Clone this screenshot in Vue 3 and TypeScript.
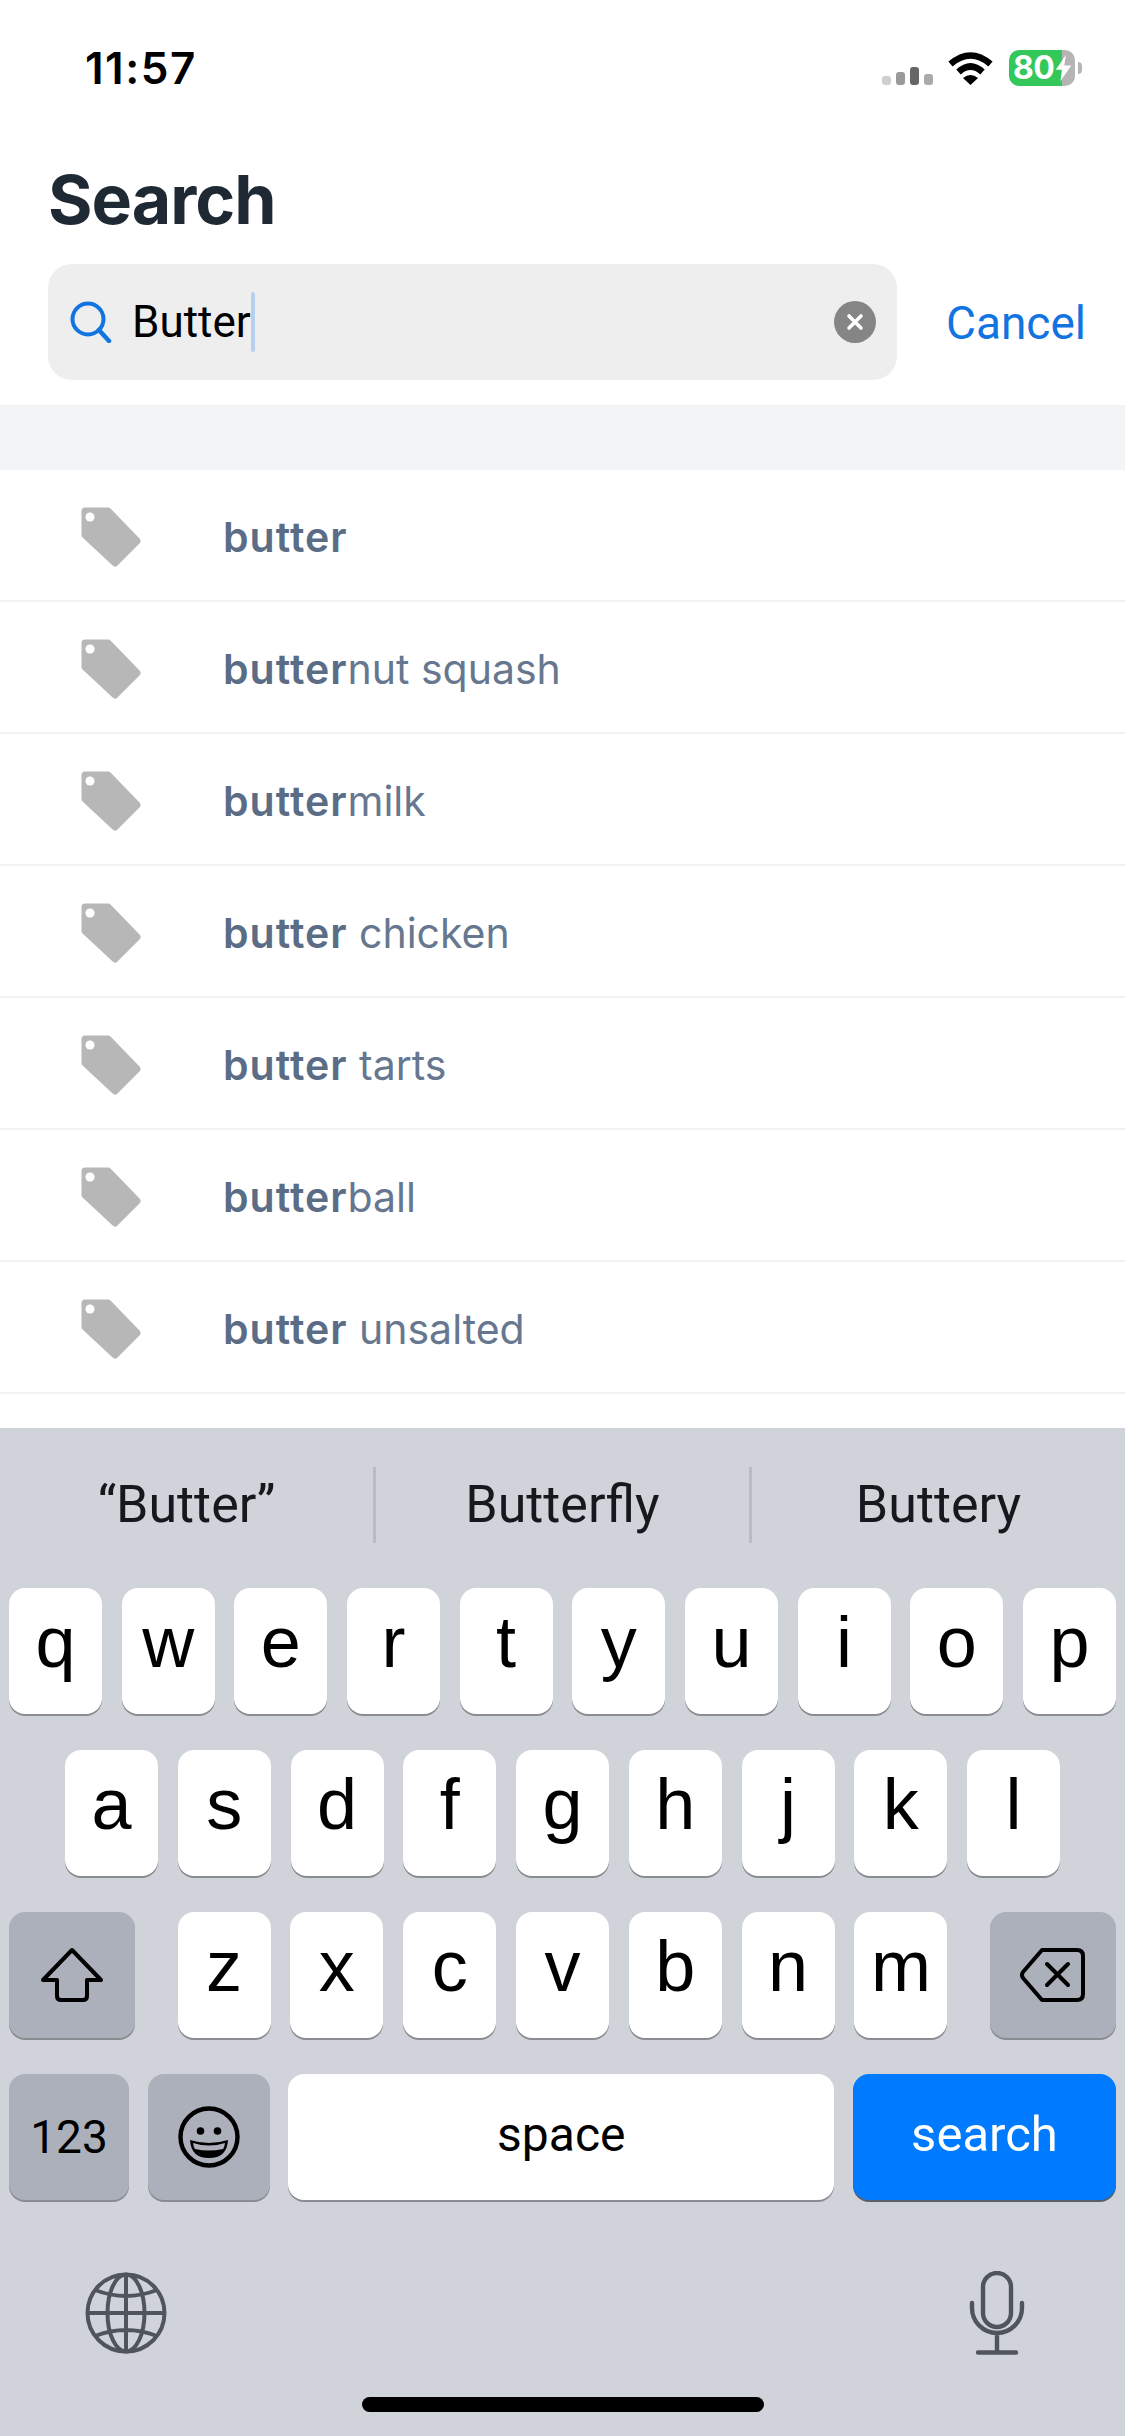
<script setup lang="ts">
interface Result { bold: string; rest: string }
const results: Result[] = [
  { bold: 'butter', rest: '' },
  { bold: 'butter', rest: 'nut squash' },
  { bold: 'butter', rest: 'milk' },
  { bold: 'butter', rest: ' chicken' },
  { bold: 'butter', rest: ' tarts' },
  { bold: 'butter', rest: 'ball' },
  { bold: 'butter', rest: ' unsalted' },
]
const suggestions: string[] = ['“Butter”', 'Butterfly', 'Buttery']
const row1: string[] = 'qwertyuiop'.split('')
const row2: string[] = 'asdfghjkl'.split('')
const row3: string[] = 'zxcvbnm'.split('')
</script>

<template>
  <div class="screen">
    <div class="status">
      <span class="time">11:57</span>
      <div class="status-icons">
        <div class="signal">
          <i class="b1"></i><i class="b2"></i><i class="b3"></i><i class="b4"></i>
        </div>
        <svg class="wifi" width="45" height="34" viewBox="0 0 45 34">
          <path d="M2.5 13 Q22.5 -4 42.5 13" fill="none" stroke="#000" stroke-width="6.5" />
          <path d="M10.5 21 Q22.5 10 34.5 21" fill="none" stroke="#000" stroke-width="6.5" />
          <path d="M15 27 L22.5 34 L30 27 Q22.5 21 15 27Z" fill="#000" />
        </svg>
        <div class="battery">
          <span class="pct">80</span>
          <svg class="bolt" width="17" height="28" viewBox="0 0 22 32" preserveAspectRatio="none">
            <path d="M14 1 L1 18 H9 L7 31 L21 13 H12 Z" fill="#fff" />
          </svg>
          <i class="nub"></i>
        </div>
      </div>
    </div>

    <h1 class="title">Search</h1>

    <div class="search-row">
      <div class="search-box">
        <svg class="mag" width="42" height="42" viewBox="0 0 42 42">
          <circle cx="18" cy="18" r="15.5" fill="none" stroke="#1274e0" stroke-width="4" />
          <path d="M29 29 L39 40" stroke="#1274e0" stroke-width="4.5" stroke-linecap="round" />
        </svg>
        <span class="query">Butter</span><i class="caret"></i>
        <svg class="clear" width="42" height="42" viewBox="0 0 42 42">
          <circle cx="21" cy="21" r="21" fill="#858585" />
          <path d="M15 15 L27 27 M27 15 L15 27" stroke="#fff" stroke-width="3.6" stroke-linecap="round" />
        </svg>
      </div>
      <span class="cancel">Cancel</span>
    </div>

    <div class="band"></div>

    <ul class="results">
      <li v-for="(r, i) in results" :key="i" class="result">
        <svg class="tag" width="60" height="60" viewBox="0 0 60 60">
          <path d="M4 4 H27 L56 34 L34 56 L4 28 Z" fill="#b7b7b7" stroke="#b7b7b7" stroke-width="7" stroke-linejoin="round" />
          <circle cx="9" cy="10" r="4.6" fill="#fff" />
        </svg>
        <span class="label"><b>{{ r.bold }}</b>{{ r.rest }}</span>
      </li>
    </ul>

    <div class="keyboard">
      <div class="suggestions">
        <span v-for="s in suggestions" :key="s" class="suggestion">{{ s }}</span>
      </div>

      <div class="keys">
        <div class="key-row row-full">
          <span v-for="k in row1" :key="k" class="key letter">{{ k }}</span>
        </div>
        <div class="key-row row-home">
          <span v-for="k in row2" :key="k" class="key letter">{{ k }}</span>
        </div>
        <div class="key-row row-full">
          <span class="key fn wide">
            <svg width="66" height="56" viewBox="0 0 64 56">
              <path d="M32 3 L61 33 H47 V49 Q47 53 43 53 H21 Q17 53 17 49 V33 H3 Z" fill="none" stroke="#000" stroke-width="4" stroke-linejoin="round" />
            </svg>
          </span>
          <div class="letter-group">
            <span v-for="k in row3" :key="k" class="key letter">{{ k }}</span>
          </div>
          <span class="key fn wide">
            <svg width="66" height="56" viewBox="0 0 66 56">
              <path d="M22 3 H57 Q63 3 63 9 V47 Q63 53 57 53 H22 L3 31 Q1 28 3 25 Z" fill="none" stroke="#000" stroke-width="4" stroke-linejoin="round" />
              <path d="M27 17 L48 38 M48 17 L27 38" stroke="#000" stroke-width="4" stroke-linecap="round" />
            </svg>
          </span>
        </div>
        <div class="key-row row-full">
          <span class="key fn num">123</span>
          <span class="key fn emoji">
            <svg width="62" height="62" viewBox="-31 -31 62 62">
              <circle r="28.5" fill="none" stroke="#000" stroke-width="4.4" />
              <circle cx="-8.5" cy="-6" r="3.8" fill="#000" />
              <circle cx="8.5" cy="-6" r="3.8" fill="#000" />
              <path d="M-19 3 Q0 9 19 3 Q18 21 0 21 Q-18 21 -19 3Z" fill="#000" />
              <path d="M-16 6 Q0 11 16 6 Q15.5 10 14 12 Q0 15 -14 12 Q-15.5 10 -16 6Z" fill="#abb0ba" />
            </svg>
          </span>
          <span class="key space">space</span>
          <span class="key go">search</span>
        </div>
      </div>

      <div class="bottom-row">
        <svg width="82" height="82" viewBox="-41 -41 82 82" fill="none" stroke="#50555c" stroke-width="4">
          <circle r="38.5" />
          <ellipse rx="18.5" ry="38.5" />
          <path d="M0 -38 V38 M-38 0 H38 M-31 -23 Q0 -11 31 -23 M-31 23 Q0 11 31 23" />
        </svg>
        <svg width="56" height="84" viewBox="0 0 56 84" fill="none" stroke="#50555c" stroke-width="4.4" stroke-linecap="round">
          <rect x="14" y="2" width="28" height="54" rx="14" />
          <path d="M3 32 V37 A25 25 0 0 0 53 37 V32 M28 62 V80 M9 81.5 H47" />
        </svg>
      </div>
      <div class="home-bar"></div>
    </div>
  </div>
</template>

<style scoped>
.screen {
  width: 1125px;
  height: 2436px;
  background: #fff;
  display: flex;
  flex-direction: column;
  overflow: hidden;
  font-family: Inter, "Liberation Sans", sans-serif;
}
.status {
  height: 120px;
  padding: 46px 50px 0 85px;
  box-sizing: border-box;
  display: flex;
  justify-content: space-between;
  align-items: flex-start;
}
.time {
  font-size: 44px;
  line-height: 44px;
  font-weight: 600;
  letter-spacing: 1.5px;
  color: #000;
}
.status-icons {
  display: flex;
  align-items: flex-start;
  margin-top: 5px;
}
.signal {
  width: 51px;
  height: 34px;
  margin-right: 15px;
  display: flex;
  gap: 5px;
  align-items: flex-end;
}
.signal i { width: 9px; border-radius: 3px; display: block; }
.b1 { height: 9px; background: #cfcfcf; }
.b2 { height: 13px; background: #999; }
.b3 { height: 18px; background: #666; }
.b4 { height: 11px; background: #aaa; }
.wifi { margin-right: 16px; }
.battery {
  position: relative;
  width: 66px;
  height: 36px;
  margin-top: -1px;
  border-radius: 10px;
  background: linear-gradient(90deg, #34c759 80%, #b5b5b5 80%);
  display: flex;
  align-items: center;
  padding-left: 4px;
  box-sizing: border-box;
}
.pct {
  color: #fff;
  font-size: 32px;
  line-height: 36px;
  font-weight: 700;
  letter-spacing: -0.5px;
}
.bolt { margin-left: 1px; flex: none; }
.nub {
  position: absolute;
  right: -7px;
  top: 12px;
  width: 4px;
  height: 12px;
  border-radius: 0 6px 6px 0;
  background: #b5b5b5;
}
.title {
  margin: 0;
  height: 144px;
  padding: 39px 0 0 48px;
  font-size: 68px;
  line-height: 80px;
  font-weight: 700;
  letter-spacing: -1px;
  color: #1f2933;
  box-sizing: border-box;
}
.search-row {
  display: flex;
  align-items: center;
  padding-left: 48px;
}
.search-box {
  width: 849px;
  height: 116px;
  background: #eee;
  border-radius: 24px;
  display: flex;
  align-items: center;
  padding: 0 21px 0 22px;
  box-sizing: border-box;
}
.query {
  margin-left: 20px;
  font-size: 44px;
  color: #000;
  font-family: Roboto, Inter, sans-serif;
}
.caret {
  width: 4px;
  height: 60px;
  border-radius: 2px;
  background: #b8d0f0;
  display: block;
}
.clear { margin-left: auto; }
.cancel {
  margin-left: 49px;
  padding-top: 2px;
  font-size: 46px;
  color: #1274e0;
  font-family: Roboto, Inter, sans-serif;
}
.band {
  height: 65px;
  margin-top: 25px;
  background: #f2f4f5;
}
.results {
  list-style: none;
  margin: 0;
  padding: 0;
}
.result {
  height: 132px;
  box-sizing: border-box;
  border-bottom: 2px solid #f0f2f4;
  display: flex;
  align-items: center;
  padding: 3px 0 0 81px;
}
.label {
  margin-left: 82px;
  font-size: 41px;
  color: #66778f;
  white-space: pre;
}
.label b { font-weight: 600; color: #5a6c86; letter-spacing: 1px; }
.keyboard {
  margin-top: auto;
  height: 1008px;
  background: #d0d3da;
  display: flex;
  flex-direction: column;
}
.suggestions {
  height: 160px;
  padding-bottom: 6px;
  box-sizing: border-box;
  display: flex;
  align-items: center;
}
.suggestion {
  flex: 1;
  text-align: center;
  font-size: 52px;
  line-height: 76px;
  color: #15181c;
  font-family: Roboto, "Liberation Sans", sans-serif;
  border-left: 3px solid #b8bbc2;
}
.suggestion:first-child { border-left: none; }
.keys {
  display: flex;
  flex-direction: column;
  gap: 36px;
}
.key-row {
  display: flex;
  justify-content: space-between;
  height: 126px;
}
.row-full { padding: 0 9px; }
.row-home { padding: 0 65px; }
.letter-group {
  width: 770px;
  display: flex;
  justify-content: space-between;
}
.key {
  height: 126px;
  border-radius: 16px;
  background: #fff;
  box-shadow: 0 2px 0 #8a8c92;
  display: flex;
  align-items: center;
  justify-content: center;
  color: #000;
  font-family: "Liberation Sans", Arial, sans-serif;
}
.letter {
  width: 93px;
  font-size: 72px;
  padding-bottom: 18px;
  box-sizing: border-box;
}
.fn { background: #abb0ba; }
.wide { width: 126px; }
.num { width: 120px; font-size: 46px; font-family: Roboto, sans-serif; }
.emoji { width: 122px; }
.space { width: 546px; font-size: 48px; padding-bottom: 6px; box-sizing: border-box; font-family: Roboto, sans-serif; }
.go {
  width: 263px;
  background: #007aff;
  box-shadow: 0 2px 0 #5a6068;
  color: #fff;
  font-size: 49px;
  padding-bottom: 6px;
  box-sizing: border-box;
  font-family: Roboto, sans-serif;
}
.bottom-row {
  margin-top: 71px;
  height: 84px;
  padding: 0 100px 0 85px;
  display: flex;
  justify-content: space-between;
  align-items: center;
}
.home-bar {
  width: 402px;
  height: 15px;
  margin: 42px auto 0;
  border-radius: 8px;
  background: #000;
}
</style>
